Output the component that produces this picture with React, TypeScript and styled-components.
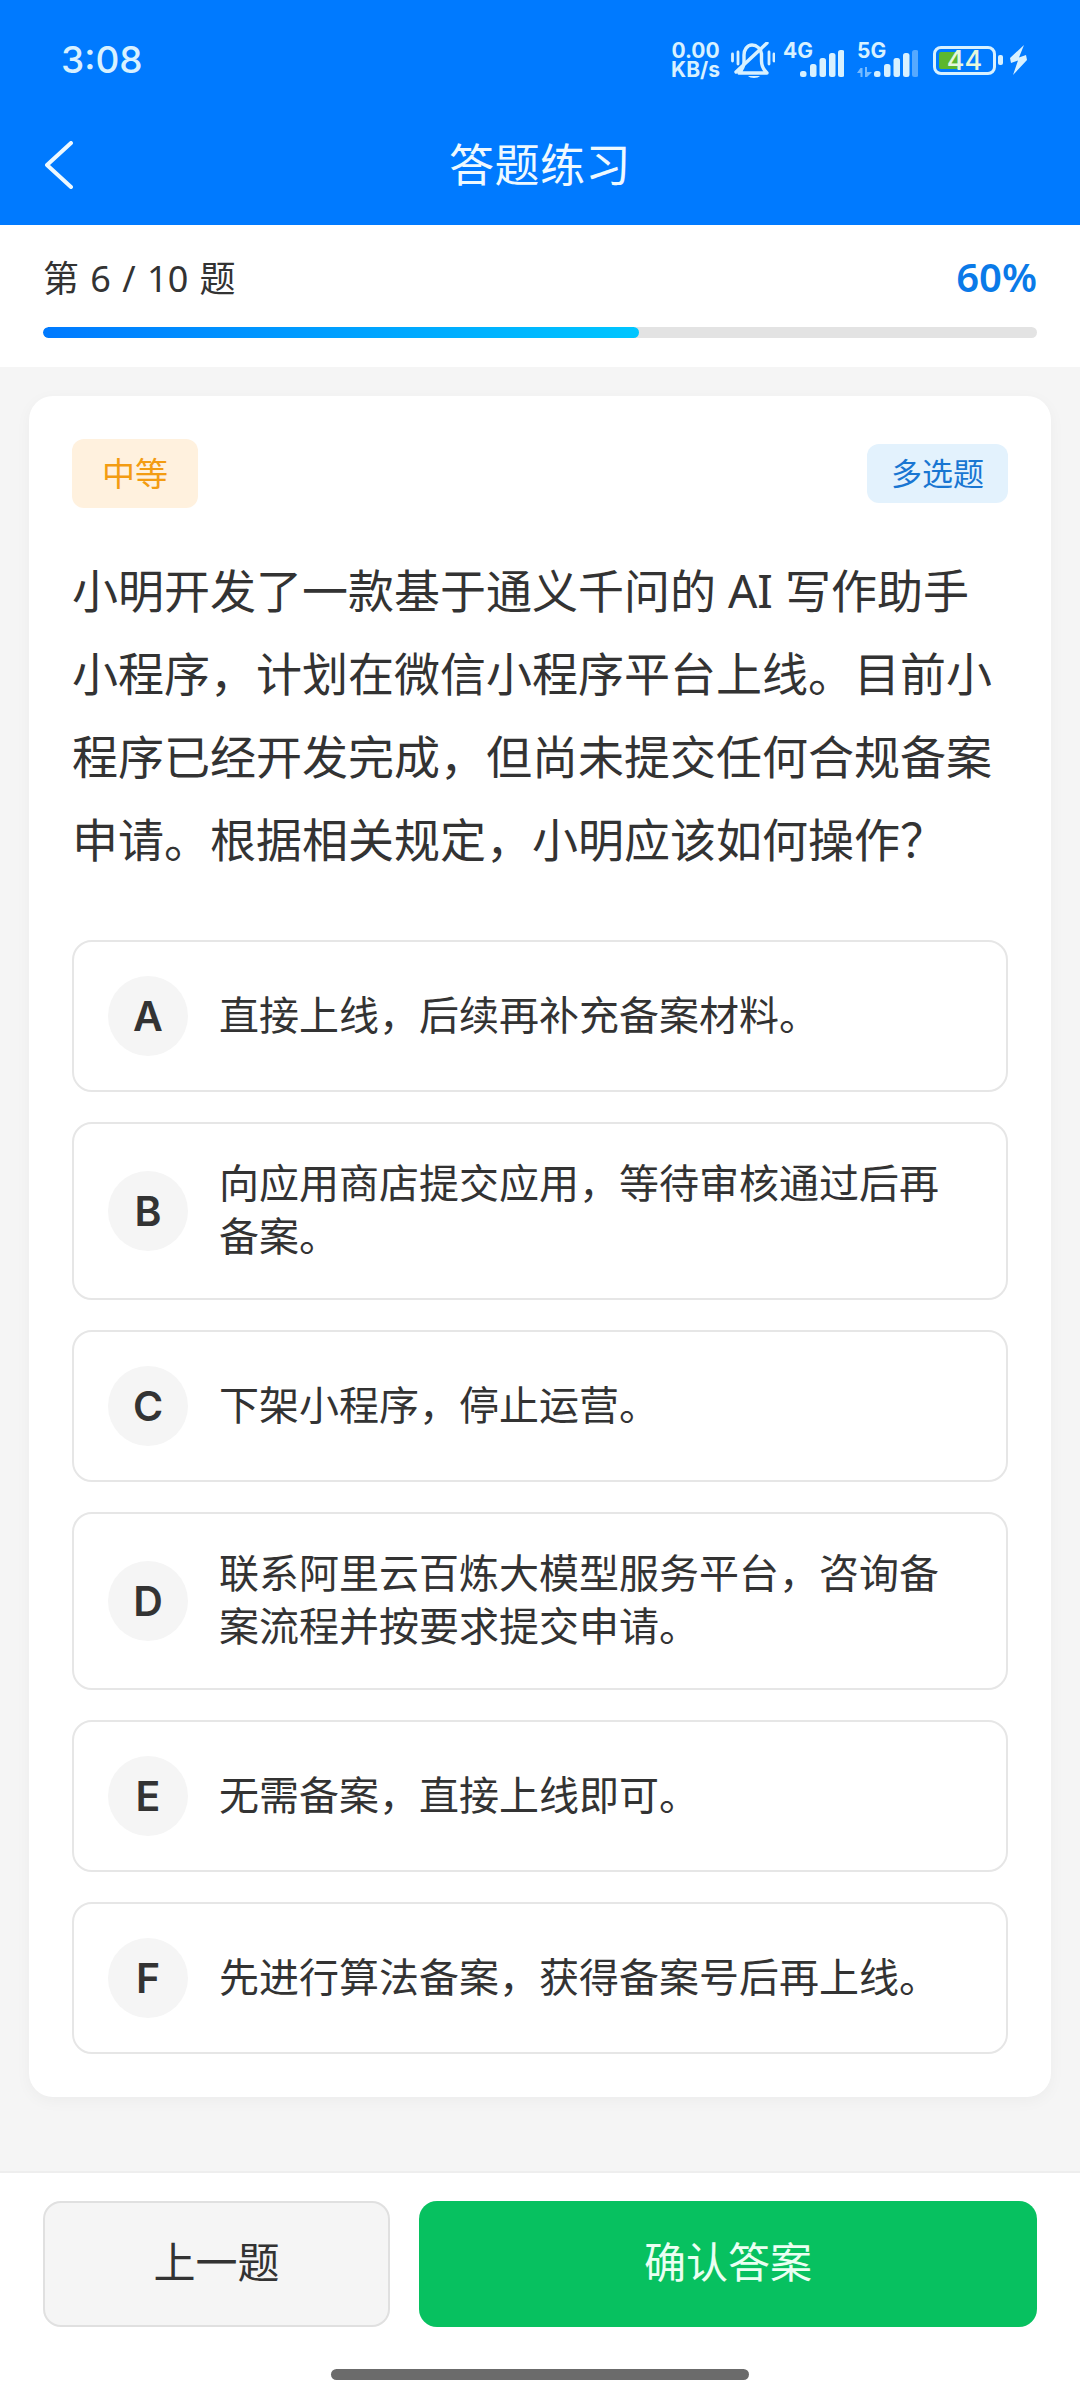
import React from 'react';
import styled, { createGlobalStyle } from 'styled-components';

const GlobalStyle = createGlobalStyle`
    html, body {
        margin: 0;
        padding: 0;
        background: #f5f5f5;
        font-family: "Noto Sans", "Noto Sans CJK SC", sans-serif;
    }
    * {
        box-sizing: border-box;
    }
`;

const Page = styled.div`
    width: 1080px;
    height: 2400px;
    display: flex;
    flex-direction: column;
    background: #f5f5f5;
`;

const Header = styled.header`
    height: 225px;
    background: #007aff;
    flex-shrink: 0;
`;

const StatusBar = styled.div`
    height: 104px;
    padding: 16px 53px 0 61px;
    display: flex;
    align-items: center;
    justify-content: space-between;
    color: #d8f1ff;
`;

const Clock = styled.div`
    font-family: Inter, sans-serif;
    font-size: 37px;
    font-weight: 500;
    line-height: 40px;
`;

const StatusIcons = styled.div`
    display: flex;
    align-items: center;
    height: 40px;
`;

const Speed = styled.div`
    width: 47px;
    margin-right: 12px;
    font-family: Inter, sans-serif;
    font-size: 21px;
    font-weight: 700;
    line-height: 19px;
    display: flex;
    flex-direction: column;
    align-items: center;
    white-space: nowrap;
`;

const BellIcon = styled.svg`
    width: 44px;
    height: 36px;
    margin-right: 8px;
`;

const SignalGroup = styled.div<{ $gap: number }>`
    position: relative;
    width: 61px;
    height: 34px;
    margin-right: ${p => p.$gap}px;
`;

const SignalLabel = styled.span`
    position: absolute;
    left: 0;
    top: -1px;
    font-family: Inter, sans-serif;
    font-size: 21px;
    font-weight: 700;
    line-height: 18px;
`;

const SignalBars = styled.svg`
    position: absolute;
    right: 0;
    bottom: 0;
    width: 44px;
    height: 27px;
`;

const DataArrows = styled.svg`
    position: absolute;
    left: 0;
    bottom: 0;
    width: 15px;
    height: 10px;
`;

const Battery = styled.div`
    position: relative;
    width: 63px;
    height: 29px;
    border: 3px solid #d8f1ff;
    border-radius: 8px;
    display: flex;
    align-items: center;
    justify-content: center;
`;

const BatteryFill = styled.div`
    position: absolute;
    left: 3px;
    top: 3px;
    bottom: 3px;
    width: 21px;
    border-radius: 2px;
    background: #5cb72e;
`;

const BatteryText = styled.span`
    position: relative;
    font-family: Inter, sans-serif;
    font-size: 27px;
    font-weight: 500;
    line-height: 23px;
    color: #e6f7dc;
`;

const BatteryTip = styled.div`
    width: 5px;
    height: 10px;
    margin: 0 7px 0 2px;
    border-radius: 2px;
    background: #d8f1ff;
`;

const BoltIcon = styled.svg`
    width: 17px;
    height: 30px;
`;

const NavBar = styled.div`
    height: 121px;
    padding: 0 45px;
    display: grid;
    grid-template-columns: 1fr auto 1fr;
    align-items: center;
`;

const BackIcon = styled.svg`
    width: 28px;
    height: 48px;
`;

const Title = styled.h1`
    margin: 0;
    font-size: 45px;
    font-weight: 400;
    letter-spacing: 0.5px;
    line-height: 60px;
    color: #eef9ff;
`;

const ProgressPanel = styled.section`
    height: 142px;
    padding: 31px 43px 0;
    background: #fff;
    flex-shrink: 0;
`;

const ProgressHead = styled.div`
    height: 40px;
    display: flex;
    align-items: center;
    justify-content: space-between;
`;

const Counter = styled.span`
    font-size: 36px;
    word-spacing: 2px;
    color: #333;
`;

const Percent = styled.span`
    font-size: 40px;
    font-weight: 600;
    color: #0a7ae8;
`;

const Track = styled.div`
    height: 11px;
    margin-top: 31px;
    border-radius: 6px;
    background: #e3e3e3;
    overflow: hidden;
`;

const TrackFill = styled.div`
    height: 100%;
    border-radius: 6px;
    background: linear-gradient(90deg, #007aff, #00c6ff);
`;

const Content = styled.main`
    flex: 1;
    padding: 29px 29px 0;
`;

const Card = styled.div`
    padding: 43px;
    border-radius: 24px;
    background: #fff;
    box-shadow: 0 4px 16px rgba(0, 0, 0, 0.04);
`;

const TagRow = styled.div`
    display: flex;
    align-items: center;
    justify-content: space-between;
`;

const DifficultyTag = styled.span`
    padding: 0 30px;
    border-radius: 12px;
    background: #fff1de;
    color: #f39c12;
    font-size: 33px;
    line-height: 69px;
`;

const TypeTag = styled.span`
    padding: 0 24px;
    border-radius: 12px;
    background: #e3f2fd;
    color: #1976d2;
    font-size: 31px;
    line-height: 59px;
`;

const Question = styled.p`
    margin: 41px 0 59px;
    font-size: 46px;
    line-height: 83px;
    color: #333;
`;

const OptionList = styled.div`
    display: flex;
    flex-direction: column;
    gap: 30px;
`;

const OptionRow = styled.div`
    display: flex;
    align-items: center;
    gap: 31px;
    padding: 34px;
    border: 2px solid #e6e6e6;
    border-radius: 20px;
    background: #fff;
`;

const OptionLetter = styled.div`
    width: 80px;
    height: 80px;
    flex-shrink: 0;
    display: flex;
    align-items: center;
    justify-content: center;
    border-radius: 50%;
    background: #f5f5f5;
    font-family: Inter, sans-serif;
    font-size: 41px;
    font-weight: 600;
    color: #333;
`;

const OptionText = styled.div`
    padding-bottom: 2px;
    margin-top: -2px;
    font-size: 40px;
    line-height: 53px;
    color: #333;
`;

const Footer = styled.footer`
    height: 229px;
    padding-top: 28px;
    border-top: 2px solid #eeeeee;
    background: #fff;
    flex-shrink: 0;
    display: flex;
    flex-direction: column;
    align-items: center;
`;

const ButtonRow = styled.div`
    width: 994px;
    display: grid;
    grid-template-columns: 347px 1fr;
    gap: 29px;
`;

const ActionButton = styled.button<{ $primary?: boolean }>`
    height: 126px;
    padding: 0 0 9px;
    border: ${p => (p.$primary ? 'none' : '2px solid #e0e0e0')};
    border-radius: 18px;
    background: ${p => (p.$primary ? '#07c160' : '#f5f5f5')};
    color: ${p => (p.$primary ? '#eafff2' : '#333')};
    font-family: inherit;
    font-size: 42px;
    font-weight: 400;
`;

const HomeBar = styled.div`
    width: 418px;
    height: 11px;
    margin-top: 42px;
    border-radius: 6px;
    background: #6b6b6b;
`;

const OPTIONS = [
    { key: 'A', text: '直接上线，后续再补充备案材料。' },
    { key: 'B', text: '向应用商店提交应用，等待审核通过后再备案。' },
    { key: 'C', text: '下架小程序，停止运营。' },
    { key: 'D', text: '联系阿里云百炼大模型服务平台，咨询备案流程并按要求提交申请。' },
    { key: 'E', text: '无需备案，直接上线即可。' },
    { key: 'F', text: '先进行算法备案，获得备案号后再上线。' },
];

const BAR_X = [0, 10, 19.5, 29, 38];
const BAR_H = [6, 13, 19, 24, 27];

const Signal = ({ faded }: { faded?: boolean }) => (
    <SignalBars viewBox="0 0 44 27">
        {BAR_X.map((x, i) => (
            <rect
                key={x}
                x={x}
                y={27 - BAR_H[i]}
                width={6.5}
                height={BAR_H[i]}
                rx={2.5}
                fill="#d8f1ff"
                opacity={faded && i === 4 ? 0.4 : 1}
            />
        ))}
    </SignalBars>
);

const App = () => {
    const progress = 60;
    return (
        <Page lang="zh-CN">
            <GlobalStyle />
            <Header>
                <StatusBar>
                    <Clock>3:08</Clock>
                    <StatusIcons>
                        <Speed>
                            <span>0.00</span>
                            <span>KB/s</span>
                        </Speed>
                        <BellIcon viewBox="0 0 44 36" fill="none" stroke="#d8f1ff" strokeWidth="3.4" strokeLinecap="round" strokeLinejoin="round">
                            <path d="M8 31 H36 C32 27 30.5 24 30.5 19 V12 C30 7 26 3 21 3 C16 3 13 8 13 13 V20 C13 25 11 28 8 31" />
                            <path d="M36 1 L5 30" />
                            <path d="M1.5 12 V19 M7 10 V22 M38 10 V22 M43 12 V19" strokeWidth="2.8" />
                            <path d="M17 34 H29 C27 36.5 19 36.5 17 34 Z" fill="#d8f1ff" stroke="none" />
                        </BellIcon>
                        <SignalGroup $gap={13}>
                            <SignalLabel>4G</SignalLabel>
                            <Signal />
                        </SignalGroup>
                        <SignalGroup $gap={15}>
                            <SignalLabel>5G</SignalLabel>
                            <DataArrows viewBox="0 0 15 10" fill="#d8f1ff" opacity="0.55">
                                <path d="M0 6 L3.5 1 L5.5 1 V10 H3.5 V6 Z M8 0 H10 V5 H15 L10 10 H8 Z" />
                            </DataArrows>
                            <Signal faded />
                        </SignalGroup>
                        <Battery>
                            <BatteryFill />
                            <BatteryText>44</BatteryText>
                        </Battery>
                        <BatteryTip />
                        <BoltIcon viewBox="0 0 17 30">
                            <polygon points="14,0 0,13 1,18 8,15.5 3,30 17,15 16,10 9,12.5" fill="#d8f1ff" />
                        </BoltIcon>
                    </StatusIcons>
                </StatusBar>
                <NavBar>
                    <BackIcon viewBox="0 0 28 48" fill="none" stroke="#eef9ff" strokeWidth="4" strokeLinecap="round" strokeLinejoin="round">
                        <path d="M26 2 L2 24 L26 46" />
                    </BackIcon>
                    <Title>答题练习</Title>
                </NavBar>
            </Header>
            <ProgressPanel>
                <ProgressHead>
                    <Counter>第 6 / 10 题</Counter>
                    <Percent>{progress}%</Percent>
                </ProgressHead>
                <Track>
                    <TrackFill style={{ width: `${progress}%` }} />
                </Track>
            </ProgressPanel>
            <Content>
                <Card>
                    <TagRow>
                        <DifficultyTag>中等</DifficultyTag>
                        <TypeTag>多选题</TypeTag>
                    </TagRow>
                    <Question>
                        小明开发了一款基于通义千问的 AI 写作助手小程序，计划在微信小程序平台上线。目前小程序已经开发完成，但尚未提交任何合规备案申请。根据相关规定，小明应该如何操作？
                    </Question>
                    <OptionList>
                        {OPTIONS.map(option => (
                            <OptionRow key={option.key}>
                                <OptionLetter>{option.key}</OptionLetter>
                                <OptionText>{option.text}</OptionText>
                            </OptionRow>
                        ))}
                    </OptionList>
                </Card>
            </Content>
            <Footer>
                <ButtonRow>
                    <ActionButton>上一题</ActionButton>
                    <ActionButton $primary>确认答案</ActionButton>
                </ButtonRow>
                <HomeBar />
            </Footer>
        </Page>
    );
};

export default App;
